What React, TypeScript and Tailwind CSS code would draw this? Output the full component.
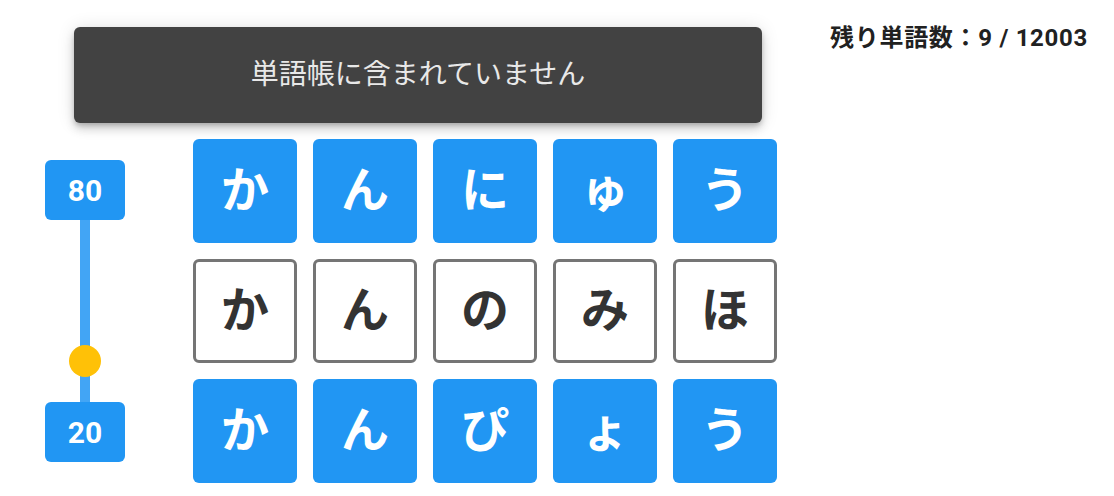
const rows: { chars: string[]; filled: boolean }[] = [
  { chars: ['か', 'ん', 'に', 'ゅ', 'う'], filled: true },
  { chars: ['か', 'ん', 'の', 'み', 'ほ'], filled: false },
  { chars: ['か', 'ん', 'ぴ', 'ょ', 'う'], filled: true },
];

function Tile({ ch, filled }: { ch: string; filled: boolean }) {
  return (
    <div
      className={
        filled
          ? 'w-[104px] h-[104px] rounded-[6px] bg-[#2196f3] text-white flex items-center justify-center text-[48px] font-bold'
          : 'w-[104px] h-[104px] rounded-[6px] bg-white border-[3px] border-[#757575] text-[#333333] flex items-center justify-center text-[48px] font-bold'
      }
    >
      {ch}
    </div>
  );
}

function RangeSlider() {
  return (
    <div className="flex flex-col items-center w-[80px]">
      <div className="w-[80px] h-[60px] rounded-[6px] bg-[#2196f3] text-white text-[30px] font-bold flex items-center justify-center">
        80
      </div>
      <div className="relative w-[10px] h-[182px] bg-[#42a5f5]">
        <div className="absolute left-1/2 top-[125px] -translate-x-1/2 w-[32px] h-[32px] rounded-full bg-[#ffc107]" />
      </div>
      <div className="w-[80px] h-[60px] rounded-[6px] bg-[#2196f3] text-white text-[30px] font-bold flex items-center justify-center">
        20
      </div>
    </div>
  );
}

export default function App() {
  return (
    <div
      className="relative w-[1114px] h-[496px] bg-white overflow-hidden"
      style={{ fontFamily: 'Roboto, "Noto Sans CJK JP", sans-serif' }}
    >
      <div className="absolute right-[26px] top-[22px] text-[24px] leading-[32px] font-bold tracking-[0.7px] text-[#212121]">
        残り単語数：9 / 12003
      </div>

      <div className="flex items-center gap-[68px] ml-[45px] pt-[139px]">
        <RangeSlider />
        <div className="flex flex-col gap-[16px]">
          {rows.map((row, i) => (
            <div key={i} className="flex gap-[16px]">
              {row.chars.map((ch, j) => (
                <Tile key={j} ch={ch} filled={row.filled} />
              ))}
            </div>
          ))}
        </div>
      </div>

      <div className="absolute left-[74px] top-[27px] w-[688px] h-[96px] rounded-[6px] bg-[#424242] text-[#e8e8e8] text-[28px] flex items-center justify-center shadow-[0_3px_5px_-1px_rgba(0,0,0,0.2),0_6px_10px_0_rgba(0,0,0,0.14),0_1px_18px_0_rgba(0,0,0,0.12)]">
        単語帳に含まれていません
      </div>
    </div>
  );
}
